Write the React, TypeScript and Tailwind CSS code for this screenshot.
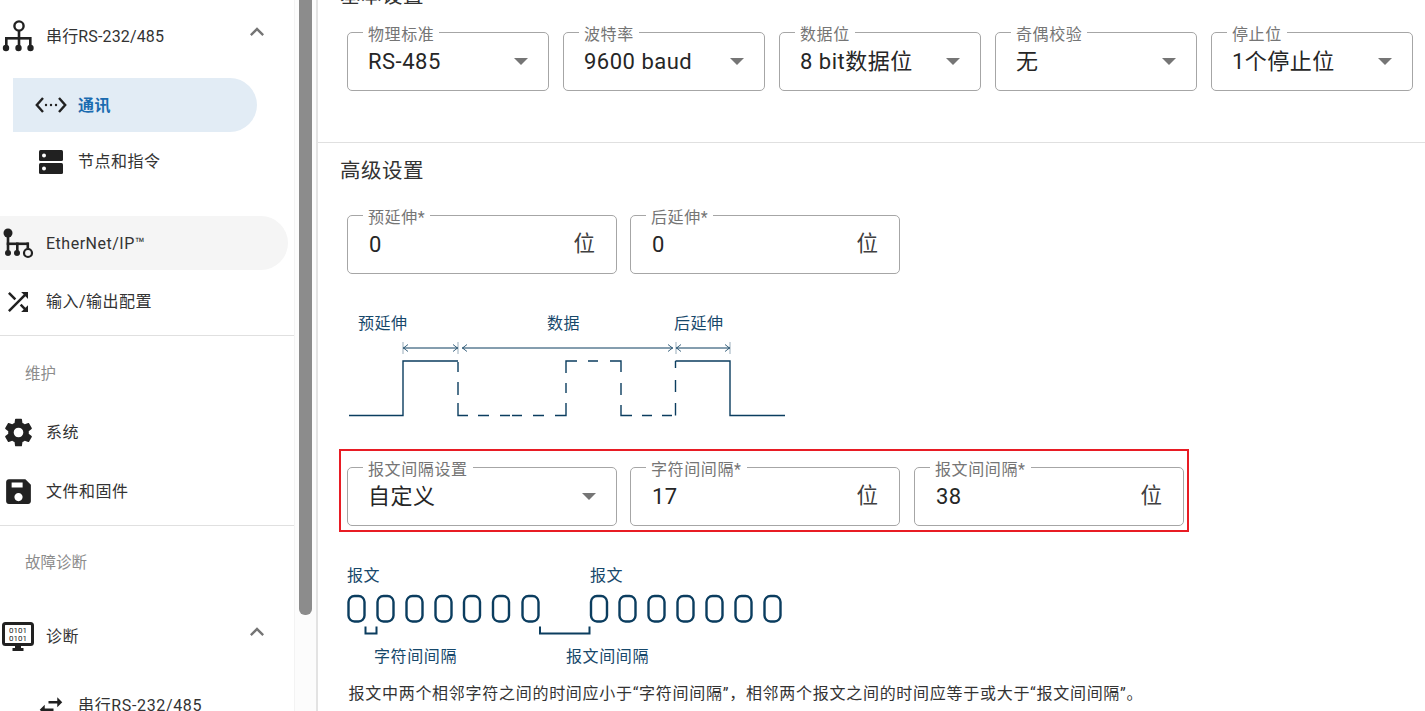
import type { ReactNode } from "react"

const font = "font-['Roboto','Noto_Sans_CJK_SC',sans-serif]"
const ink = "#0b3d5f"
const inkText = "#17486b"
const svgFont = "Roboto, 'Noto Sans CJK SC', sans-serif"

const Icon = ({ d, size = 32, className = "" }: { d: string; size?: number; className?: string }) => (
  <svg width={size} height={size} viewBox="0 0 24 24" fill="currentColor" className={className}>
    <path d={d} />
  </svg>
)

const expandLess = "m12 8-6 6 1.41 1.41L12 10.83l4.59 4.58L18 14z"
const shuffle = "M10.59 9.17 5.41 4 4 5.41l5.17 5.17zM14.5 4l2.04 2.04L4 18.59 5.41 20 17.96 7.46 20 9.5V4zm.33 9.41-1.41 1.41 3.13 3.13L14.5 20H20v-5.5l-2.04 2.04z"
const cog = "M12,15.5A3.5,3.5 0 0,1 8.5,12A3.5,3.5 0 0,1 12,8.5A3.5,3.5 0 0,1 15.5,12A3.5,3.5 0 0,1 12,15.5M19.43,12.97C19.47,12.65 19.5,12.33 19.5,12C19.5,11.67 19.47,11.34 19.43,11L21.54,9.37C21.73,9.22 21.78,8.95 21.66,8.73L19.66,5.27C19.54,5.05 19.27,4.96 19.05,5.05L16.56,6.05C16.04,5.66 15.5,5.32 14.87,5.07L14.5,2.42C14.46,2.18 14.25,2 14,2H10C9.75,2 9.54,2.18 9.5,2.42L9.13,5.07C8.5,5.32 7.96,5.66 7.44,6.05L4.95,5.05C4.73,4.96 4.46,5.05 4.34,5.27L2.34,8.73C2.21,8.95 2.27,9.22 2.46,9.37L4.57,11C4.53,11.34 4.5,11.67 4.5,12C4.5,12.33 4.53,12.65 4.57,12.97L2.46,14.63C2.27,14.78 2.21,15.05 2.34,15.27L4.34,18.73C4.46,18.95 4.73,19.03 4.95,18.95L7.44,17.94C7.96,18.34 8.5,18.68 9.13,18.93L9.5,21.58C9.54,21.82 9.75,22 10,22H14C14.25,22 14.46,21.82 14.5,21.58L14.87,18.93C15.5,18.67 16.04,18.34 16.56,17.94L19.05,18.95C19.27,19.03 19.54,18.95 19.66,18.73L21.66,15.27C21.78,15.05 21.73,14.78 21.54,14.63L19.43,12.97Z"
const save = "M17 3H5c-1.11 0-2 .9-2 2v14c0 1.1.89 2 2 2h14c1.1 0 2-.9 2-2V7zm-5 16c-1.66 0-3-1.34-3-3s1.34-3 3-3 3 1.34 3 3-1.34 3-3 3m3-10H7V5.500h8z"
const swap = "M6.99 11 3 15l3.99 4v-3H14v-2H6.99zM21 9l-3.99-4v3H10v2h7.01v3z"

const SerialIcon = () => (
  <svg width="36" height="36" viewBox="0 0 36 36" fill="#212121">
    <circle cx="19" cy="7" r="4.600" fill="none" stroke="#212121" strokeWidth="2.400" />
    <rect x="17.700" y="11" width="2.600" height="18" />
    <rect x="6" y="18" width="24.500" height="2.600" />
    <rect x="5" y="18" width="2.600" height="11" />
    <rect x="29" y="18" width="2.600" height="11" />
    <circle cx="6" cy="29" r="3.200" />
    <circle cx="18.500" cy="29" r="3.200" />
    <circle cx="30.500" cy="29" r="3.200" />
  </svg>
)

const EthernetIcon = () => (
  <svg width="36" height="36" viewBox="0 0 36 36" fill="#212121">
    <circle cx="8" cy="7" r="4.500" />
    <rect x="6.700" y="9" width="2.600" height="18" />
    <rect x="6.700" y="16.500" width="22" height="2.600" />
    <rect x="16" y="16.500" width="2.600" height="10" />
    <rect x="26.500" y="16.500" width="2.600" height="6" />
    <circle cx="8" cy="27" r="3" />
    <circle cx="17" cy="27" r="3" />
    <circle cx="28" cy="27" r="4" fill="none" stroke="#212121" strokeWidth="2.200" />
  </svg>
)

const CodeDots = () => (
  <svg width="32" height="32" viewBox="0 0 32 32" fill="none" stroke="#212121" strokeWidth="2.400">
    <path d="M8 9 1.800 16 8 23" />
    <path d="M24 9 30.200 16 24 23" />
    <circle cx="11" cy="16" r="1.200" fill="#212121" stroke="none" />
    <circle cx="16" cy="16" r="1.200" fill="#212121" stroke="none" />
    <circle cx="21" cy="16" r="1.200" fill="#212121" stroke="none" />
  </svg>
)

const StorageIcon = () => (
  <svg width="24" height="24" viewBox="0 0 24 24">
    <rect x="0" y="0" width="24" height="11" rx="1.500" fill="#212121" />
    <rect x="0" y="13" width="24" height="11" rx="1.500" fill="#212121" />
    <circle cx="5" cy="5.500" r="2" fill="#fff" />
    <circle cx="5" cy="18.500" r="2" fill="#fff" />
  </svg>
)

const MonitorIcon = () => (
  <svg width="32" height="32" viewBox="0 0 32 32">
    <rect x="1.500" y="2.500" width="29" height="21" rx="2" fill="none" stroke="#212121" strokeWidth="3" />
    <rect x="13" y="24" width="6" height="4" fill="#212121" />
    <rect x="10.500" y="27" width="11" height="3" fill="#212121" />
    <text x="16" y="12" textAnchor="middle" fontSize="8" fontFamily="Roboto" fill="#212121">0101</text>
    <text x="16" y="20" textAnchor="middle" fontSize="8" fontFamily="Roboto" fill="#212121">0101</text>
  </svg>
)

const NavRow = ({ icon, label, sub, chevron, className = "", labelClass = "tracking-[0.5px]" }: { icon: ReactNode; label: string; sub?: boolean; chevron?: boolean; className?: string; labelClass?: string }) => (
  <div className={`flex h-[54px] items-center shrink-0 ${sub ? "pl-[33px]" : ""} ${className}`}>
    <div className="flex w-[36px] items-center justify-center shrink-0 pt-[1px] text-[#212121]">{icon}</div>
    <span className={`text-[16px] pt-[2px] text-[#333] ${sub ? "ml-[9px]" : "ml-[10px]"} ${labelClass}`}>{label}</span>
    {chevron && <Icon d={expandLess} size={28} className="ml-auto mr-[23px] -mt-[8px] text-[#757575]" />}
  </div>
)

const Field = ({ label, value, unit, select, className = "" }: { label: string; value: string; unit?: string; select?: boolean; className?: string }) => (
  <div className={`relative h-[59px] rounded-[5px] border border-[#a6a6a6] flex items-center ${unit ? "pl-[21px] pr-[21px]" : "pl-[20px] pr-[22px]"} ${className}`}>
    <span className="absolute left-[15px] -top-[6px] bg-white px-[5px] text-[16px] leading-[16px] tracking-[0.6px] text-[#757575]">{label}</span>
    <span className="text-[22px] tracking-[0.5px] text-[#262626]">{value}</span>
    {unit && <span className="ml-auto text-[21.500px] text-[#404040]">{unit}</span>}
    {select && <span className="ml-auto mr-[-2px] w-0 h-0 border-x-[7px] border-x-transparent border-t-[7px] border-t-[#757575]" />}
  </div>
)

const Waveform = () => (
  <svg width="460" height="130" viewBox="0 0 460 130" className="block ml-[-7px]" fill="none" stroke={ink} strokeWidth="1.400">
    <text x="18" y="29" fontSize="16" letterSpacing="0.5" fill={inkText} stroke="none" fontFamily={svgFont}>预延伸</text>
    <text x="207" y="29" fontSize="16" letterSpacing="0.5" fill={inkText} stroke="none" fontFamily={svgFont}>数据</text>
    <text x="334" y="29" fontSize="16" letterSpacing="0.5" fill={inkText} stroke="none" fontFamily={svgFont}>后延伸</text>
    <path d="M63 48h55M122 48h211M336 48h54" strokeWidth="1" />
    <path d="M68 44.500 63.500 48l4.500 3.500M113 44.500l4.500 3.500-4.500 3.500M127 44.500 122.500 48l4.500 3.500M328 44.500l4.500 3.500-4.500 3.500M341 44.500 336.500 48l4.500 3.500M385 44.500l4.500 3.500-4.500 3.500" strokeWidth="0.8" />
    <path d="M63 42v12M118 42v12M336 42v12M390 42v12" strokeWidth="0.7" opacity="0.6" />
    <path d="M9 115.500h54V61h55" />
    <path d="M118 62v10M118 82v13M118 103v12.500H128M138 115.500h11M160 115.500h10M172 115.500h10M193 115.500h11M215 115.500h11V103M226 93V83M226 73V61H237M248 61h10M270 61h11V72M281 83V95M281 105V115.500H292M302 115.500h10M322 115.500h10M335.500 115.500V103M335.500 92V80M335.500 68V61" />
    <path d="M335.500 61H390v54.500h55" />
  </svg>
)

const FrameGlyphs = () => {
  const xs = [8.500, 37.500, 66.500, 95.500, 124, 153, 182.500, 251, 279.500, 308.500, 337.500, 366.500, 395.500, 424.500]
  return (
    <svg width="460" height="110" viewBox="0 0 460 110" className="block ml-[-7px]" fill="none" stroke={ink}>
      <text x="7" y="21" fontSize="16" letterSpacing="0.5" fill={inkText} stroke="none" fontFamily={svgFont}>报文</text>
      <text x="250" y="21" fontSize="16" letterSpacing="0.5" fill={inkText} stroke="none" fontFamily={svgFont}>报文</text>
      {xs.map((x) => (
        <rect key={x} x={x} y="36" width="16" height="25.500" rx="6" strokeWidth="2.400" />
      ))}
      <path d="M25.500 66.500v7H36.500v-7M200 66.500v7H249.500v-7" strokeWidth="2" />
      <text x="34" y="102" fontSize="16" letterSpacing="0.6" fill={inkText} stroke="none" fontFamily={svgFont}>字符间间隔</text>
      <text x="226" y="102" fontSize="16" letterSpacing="0.6" fill={inkText} stroke="none" fontFamily={svgFont}>报文间间隔</text>
    </svg>
  )
}

export default function App() {
  return (
    <div className={`${font} flex h-[711px] w-[1425px] overflow-hidden bg-white`}>
      <aside className="flex w-[318px] shrink-0 border-r-2 border-[#e3e3e3]">
        <nav className="flex w-[294px] shrink-0 flex-col">
          <NavRow icon={<SerialIcon />} label="串行RS-232/485" chevron className="mt-[9px]" labelClass="tracking-[0.15px]" />
          <div className="mt-[15px] flex h-[54px] shrink-0 ml-[13px] w-[244px] items-center rounded-r-[27px] bg-[#e2ecf5]">
            <div className="ml-[22px] flex w-[32px] justify-center"><CodeDots /></div>
            <span className="ml-[11px] pt-[2px] text-[16px] font-bold tracking-[0.5px] text-[#1a6bb0]">通讯</span>
          </div>
          <NavRow icon={<StorageIcon />} label="节点和指令" sub className="mt-[2px]" />
          <NavRow icon={<EthernetIcon />} label="EtherNet/IP™" className="mt-[28px] rounded-r-[27px] bg-[#f5f5f5] w-[288px]" />
          <NavRow icon={<Icon d={shuffle} size={30} />} label="输入/输出配置" className="mt-[4px]" />
          <div className="mt-[7px] h-px shrink-0 bg-[#e0e0e0]" />
          <div className="mt-[27px] h-[22px] shrink-0 pl-[25px] text-[15.500px] leading-[22px] text-[#8c8c8c]">维护</div>
          <NavRow icon={<Icon d={cog} size={33} />} label="系统" className="mt-[20px]" />
          <NavRow icon={<Icon d={save} size={33} />} label="文件和固件" className="mt-[5px]" />
          <div className="mt-[7px] h-px shrink-0 bg-[#e0e0e0]" />
          <div className="mt-[26px] h-[22px] shrink-0 pl-[25px] text-[15.500px] leading-[22px] text-[#8c8c8c]">故障诊断</div>
          <NavRow icon={<MonitorIcon />} label="诊断" chevron className="mt-[35px]" />
          <NavRow icon={<Icon d={swap} size={30} />} label="串行RS-232/485" sub className="mt-[15px]" labelClass="tracking-[0.65px]" />
        </nav>
        <div className="flex w-[22px] flex-col bg-[#fcfcfc] border-l border-[#f3f3f3] pl-[4px]">
          <div className="h-[615px] w-[13px] rounded-b-[6px] bg-[#8c8c8c]" />
        </div>
      </aside>
      <main className="min-w-0 flex-1 -mt-[16px]">
        <h2 className="ml-[22px] h-[24px] text-[20.500px] leading-[24px] tracking-[0.5px] text-[#333]">基本设置</h2>
        <div className="mt-[24px] ml-[29px] flex gap-[14px]">
          <Field label="物理标准" value="RS-485" select className="w-[202px]" />
          <Field label="波特率" value="9600 baud" select className="w-[202px]" />
          <Field label="数据位" value="8 bit数据位" select className="w-[202px]" />
          <Field label="奇偶校验" value="无" select className="w-[202px]" />
          <Field label="停止位" value="1个停止位" select className="w-[202px]" />
        </div>
        <div className="mt-[51px] h-px bg-[#e0e0e0]" />
        <h2 className="ml-[22px] mt-[16px] h-[24px] text-[20.500px] leading-[24px] tracking-[0.5px] text-[#333]">高级设置</h2>
        <div className="mt-[32px] ml-[29px] flex gap-[13px]">
          <Field label="预延伸*" value="0" unit="位" className="w-[270px]" />
          <Field label="后延伸*" value="0" unit="位" className="w-[270px]" />
        </div>
        <div className="mt-[26px] ml-[29px]"><Waveform /></div>
        <div className="mt-[19px] ml-[21px] w-[850px] h-[83px] border-2 border-[#e81c24] pl-[6px] pt-[16px] flex gap-[13px]">
          <Field label="报文间隔设置" value="自定义" select className="w-[270px]" />
          <Field label="字符间间隔*" value="17" unit="位" className="w-[270px]" />
          <Field label="报文间间隔*" value="38" unit="位" className="w-[270px] ml-[1px]" />
        </div>
        <div className="mt-[28px] ml-[29px]"><FrameGlyphs /></div>
        <p className="ml-[30.500px] mt-[12px] text-[16px] tracking-[0.72px] text-[#333]">报文中两个相邻字符之间的时间应小于“字符间间隔”，相邻两个报文之间的时间应等于或大于“报文间间隔”。</p>
      </main>
    </div>
  )
}
